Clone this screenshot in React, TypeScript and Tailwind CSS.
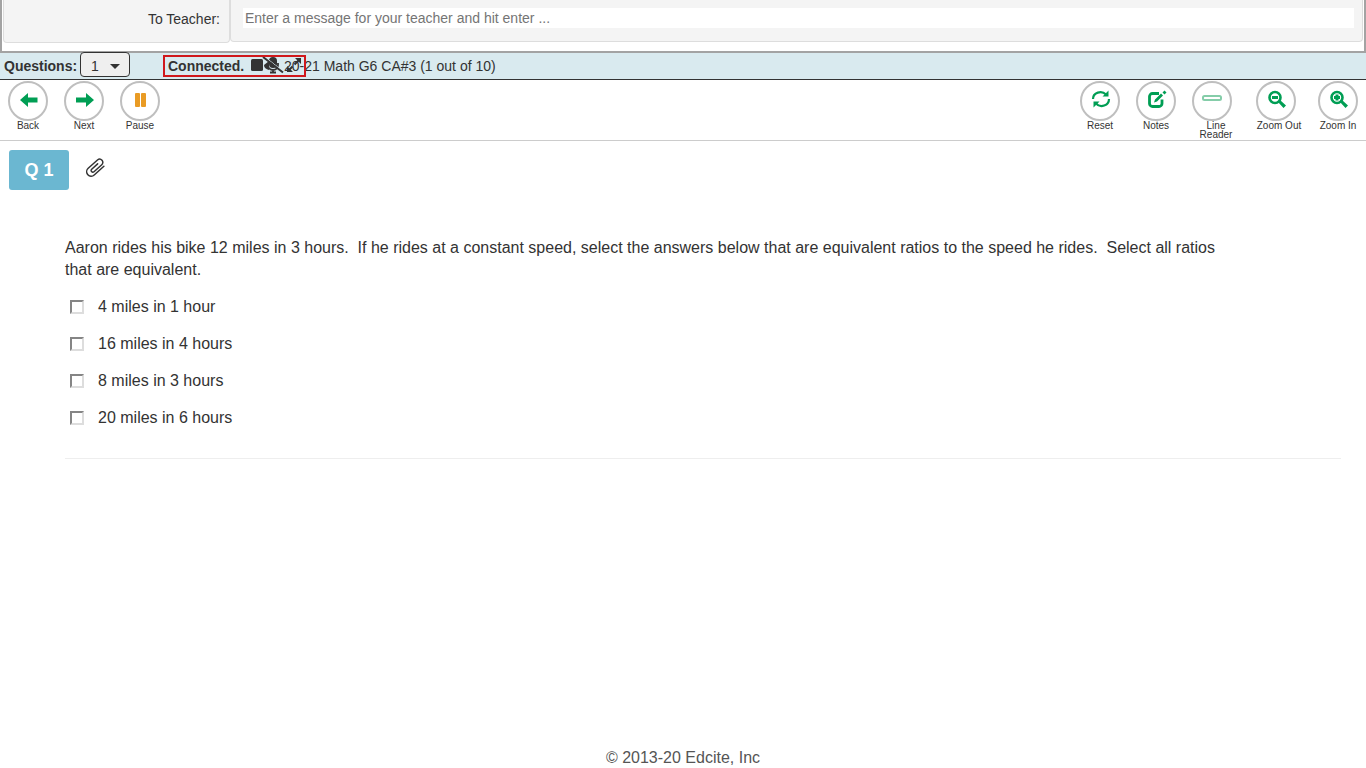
import { useState } from 'react'
import type { ReactNode } from 'react'

const prompt =
  'Aaron rides his bike 12 miles in 3 hours. \u00a0If he rides at a constant speed, select the answers below that are equivalent ratios to the speed he rides. \u00a0Select all ratios that are equivalent.'

const choices = [
  '4 miles in 1 hour',
  '16 miles in 4 hours',
  '8 miles in 3 hours',
  '20 miles in 6 hours',
]

function Icon({ children, className }: { children: ReactNode; className?: string }) {
  return (
    <svg viewBox="0 0 20 20" className={`w-5 h-5 overflow-visible fill-current ${className ?? ''}`} aria-hidden="true">
      {children}
    </svg>
  )
}

function ToolButton({ label, width = 'w-10', children }: { label: string; width?: string; children: ReactNode }) {
  return (
    <button type="button" className={`flex flex-col text-[#009e54] ${width}`}>
      <span className="flex w-10 h-10 items-center justify-center rounded-full border-2 border-[#bfbfbf] bg-white pl-[2px]">
        {children}
      </span>
      <span className="w-full text-[10px] leading-[9px] text-[#333] text-center">{label}</span>
    </button>
  )
}

function MessageBar() {
  return (
    <div className="flex h-[53px] items-start border-x-2 border-b-2 border-[#a3a3a3] bg-white px-px">
      <label
        htmlFor="teacher-message"
        className="flex h-[43px] w-[227px] shrink-0 items-start justify-end rounded-b border-x border-b border-[#ddd] bg-[#f4f4f4] pt-[9px] pr-[9px] text-sm"
      >
        To Teacher:
      </label>
      <div className="h-[42px] flex-1 rounded-b border-x border-b border-[#ddd] bg-[#f4f4f4] pl-3 pr-2 pt-2">
        <input
          id="teacher-message"
          type="text"
          placeholder="Enter a message for your teacher and hit enter ..."
          className="block h-5 w-full bg-white px-[2px] text-sm outline-none placeholder:text-[#757575]"
        />
      </div>
    </div>
  )
}

function StatusBox() {
  return (
    <div className="absolute left-[163px] top-[2px] flex h-[22px] w-[143px] items-center border-2 border-[#d0181c] pl-[3px]">
      <span className="text-sm font-bold">Connected.</span>
      {/* camera, muted microphone, expand */}
      <svg viewBox="0 0 52 18" className="ml-[7px] h-[18px] w-[52px] shrink-0" aria-hidden="true">
        <rect x="0" y="2" width="12" height="12" rx="1.500" fill="#333" />
        <path d="M13 8l5-4v9c-3-1-5-2-5-5z" fill="#333" />
        <rect x="18" y="0" width="8" height="11" rx="4" fill="#333" />
        <path d="M17 7v1a5 5 0 0 0 10 0V6M22 13v2M19 15.500h6" fill="none" stroke="#333" strokeWidth="1.800" />
        <path d="M14 0l19 15" stroke="#d9eaef" strokeWidth="1" />
        <path d="M12 0l20 15.500" stroke="#333" strokeWidth="2" />
        <path d="M44 1h6v6zM36 9v6h6z" fill="#333" />
        <path d="M48 3l-4.500 4.500M41.500 9.500l-3.500 3.500" fill="none" stroke="#333" strokeWidth="2" />
      </svg>
    </div>
  )
}

function TitleBar() {
  const [question, setQuestion] = useState('1')
  return (
    <div className="relative flex h-[27px] items-center border-b border-[#333] bg-[#d9eaef] pl-1">
      <label htmlFor="question" className="w-[76px] text-sm font-bold">
        Questions:
      </label>
      <div className="relative -mt-[3px]">
        <select
          id="question"
          value={question}
          onChange={(e) => setQuestion(e.target.value)}
          className="block h-[25px] w-[50px] appearance-none rounded border border-[#333] bg-[#efefef] pl-[10px] pt-[2px] text-sm"
        >
          {Array.from({ length: 10 }, (_, i) => (
            <option key={i}>{i + 1}</option>
          ))}
        </select>
        <svg viewBox="0 0 10 5" className="pointer-events-none absolute right-[10px] top-[12px] h-[5px] w-[10px]" aria-hidden="true">
          <path d="M0 0h10L5 5z" fill="#333" />
        </svg>
      </div>
      <h1 className="ml-[154px] text-sm">20-21 Math G6 CA#3 (1 out of 10)</h1>
      <StatusBox />
    </div>
  )
}

function Toolbar() {
  return (
    <div className="flex h-[61px] justify-between border-b border-[#ccc] px-2 pt-px">
      <div className="flex items-start gap-4">
        <ToolButton label="Back">
          <Icon><path d="M1 9l8-7v4.500h9.500v5H9V16z" /></Icon>
        </ToolButton>
        <ToolButton label="Next">
          <Icon><path d="M19 9l-8-7v4.500H1v5h10V16z" /></Icon>
        </ToolButton>
        <ToolButton label="Pause">
          <Icon className="text-[#e99b24]">
            <rect x="4" y="2" width="5" height="14" rx="1" />
            <rect x="10" y="2" width="5" height="14" rx="1" />
          </Icon>
        </ToolButton>
      </div>
      <div className="flex items-start gap-4">
        <ToolButton label="Reset">
          <Icon>
            <path d="M2 8C2 1.500 10.500-1 15 3.500M18 8c0 6.500-8.500 9.500-13 4.500" fill="none" stroke="currentColor" strokeWidth="2.200" />
            <path d="M17.500-.5v6h-6zM2.500 16.500v-6h6z" />
          </Icon>
        </ToolButton>
        <ToolButton label="Notes">
          <Icon>
            <path d="M12 2.500H5.500A3 3 0 0 0 2.500 5.500v7A3 3 0 0 0 5.500 15.500H12A3 3 0 0 0 15 12.500V8.500" fill="none" stroke="currentColor" strokeWidth="2.800" />
            <path d="M7 11.500l1-3 6-6 2 2-6 6zM17.500-.5l2 2-2 2-2-2z" />
          </Icon>
        </ToolButton>
        <ToolButton label="Line Reader" width="w-12">
          <Icon><rect x="0" y="5" width="18" height="4" rx="1.500" fill="none" stroke="#85cda9" strokeWidth="2" /></Icon>
        </ToolButton>
        <ToolButton label="Zoom Out" width="w-[46px] whitespace-nowrap">
          <Icon>
            <circle cx="8" cy="6.500" r="5.500" fill="none" stroke="currentColor" strokeWidth="2.600" />
            <path d="M5 5h6v3H5zM11 11l2-2 6 5.500-2.500 2.500z" />
          </Icon>
        </ToolButton>
        <ToolButton label="Zoom In">
          <Icon>
            <circle cx="8" cy="6.500" r="5.500" fill="none" stroke="currentColor" strokeWidth="2.600" />
            <path d="M6.500 3.500h3V5H11v3H9.500v1.500h-3V8H5V5h1.500zM11 11l2-2 6 5.500-2.500 2.500z" />
          </Icon>
        </ToolButton>
      </div>
    </div>
  )
}

export default function App() {
  return (
    <div className="flex min-h-screen flex-col bg-white font-['Liberation_Sans',Arial,sans-serif] text-[#333]">
      <MessageBar />
      <TitleBar />
      <Toolbar />

      <main className="flex-1 px-[9px] pt-[9px]">
        <div className="flex items-start">
          <h2 className="flex h-10 w-[60px] items-center justify-center rounded-[3px] bg-[#6bb7d1] text-lg font-bold text-white">
            Q 1
          </h2>
          <button type="button" aria-label="Attachments" className="ml-[17px] mt-2">
            <svg viewBox="0 0 20 20" className="h-5 w-5" fill="none" stroke="#333" strokeWidth="1.500" strokeLinecap="round" aria-hidden="true">
              <path
                transform="rotate(-42 10 10)"
                d="M17 14H4a4.500 4.500 0 0 1 0-9H16.500a3.200 3.200 0 0 1 0 6.400H6a1.700 1.700 0 0 1 0-3.400H14"
              />
            </svg>
          </button>
        </div>

        <fieldset className="mr-4 ml-14 mt-[47px] border-b border-[#eee] pb-[29px]">
          <legend className="max-w-[1160px] text-base leading-[22px]">{prompt}</legend>
          <div className="mt-[15px] flex flex-col gap-[15px]">
            {choices.map((choice) => (
              <label key={choice} className="flex items-center pl-[5px] text-base leading-[22px]">
                <input
                  type="checkbox"
                  className="mr-[14px] h-[14px] w-[14px] appearance-none border-2 border-t-[#858585] border-l-[#858585] border-r-[#ddd] border-b-[#ddd] bg-white checked:bg-[#6bb7d1]"
                />
                {choice}
              </label>
            ))}
          </div>
        </fieldset>
      </main>

      <footer className="text-center text-base leading-[20px] text-[#555]">© 2013-20 Edcite, Inc</footer>
    </div>
  )
}
